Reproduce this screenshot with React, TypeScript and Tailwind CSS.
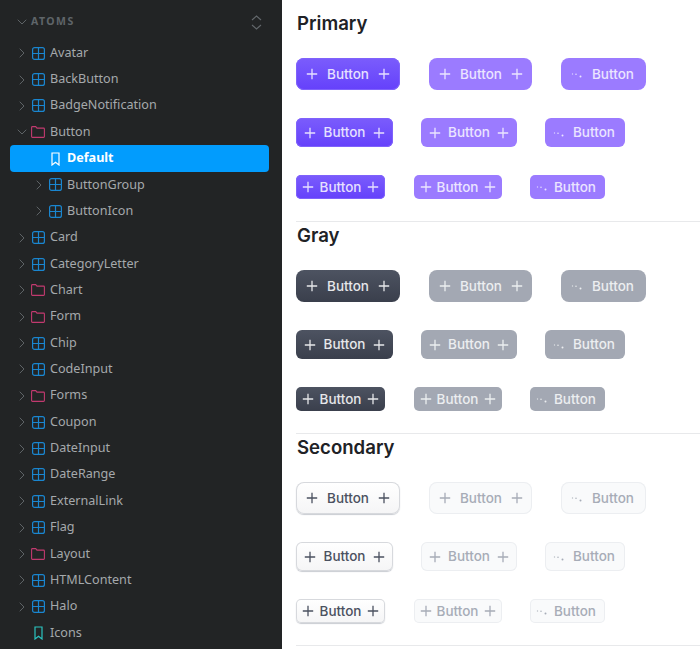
import React from 'react';
import { ChevronDown, ChevronRight } from 'lucide-react';

type Kind = 'component' | 'folder' | 'story';
interface TreeItem {
  label: string;
  kind: Kind;
  depth?: number;
  open?: boolean;
  selected?: boolean;
}

const items: TreeItem[] = [
  { label: 'Avatar', kind: 'component' },
  { label: 'BackButton', kind: 'component' },
  { label: 'BadgeNotification', kind: 'component' },
  { label: 'Button', kind: 'folder', open: true },
  { label: 'Default', kind: 'story', depth: 1, selected: true },
  { label: 'ButtonGroup', kind: 'component', depth: 1 },
  { label: 'ButtonIcon', kind: 'component', depth: 1 },
  { label: 'Card', kind: 'component' },
  { label: 'CategoryLetter', kind: 'component' },
  { label: 'Chart', kind: 'folder' },
  { label: 'Form', kind: 'folder' },
  { label: 'Chip', kind: 'component' },
  { label: 'CodeInput', kind: 'component' },
  { label: 'Forms', kind: 'folder' },
  { label: 'Coupon', kind: 'component' },
  { label: 'DateInput', kind: 'component' },
  { label: 'DateRange', kind: 'component' },
  { label: 'ExternalLink', kind: 'component' },
  { label: 'Flag', kind: 'component' },
  { label: 'Layout', kind: 'folder' },
  { label: 'HTMLContent', kind: 'component' },
  { label: 'Halo', kind: 'component' },
  { label: 'Icons', kind: 'story' },
];

const GridIcon = () => (
  <svg width="13" height="13" viewBox="0 0 13 13" fill="none" stroke="#1a86d0" strokeWidth="1.2">
    <rect x="0.6" y="0.6" width="11.8" height="11.8" rx="2" />
    <path d="M6.5 0.6v11.8M0.6 6.5h11.8" />
  </svg>
);

const FolderIcon = () => (
  <svg width="14" height="12" viewBox="0 0 14 12" fill="none" stroke="#c23a6f" strokeWidth="1.1">
    <path d="M0.6 1.4c0-0.5 0.3-0.8 0.8-0.8h3.3l1.3 1.5h6.6c0.5 0 0.8 0.3 0.8 0.8v7.7c0 0.5-0.3 0.8-0.8 0.8H1.4c-0.5 0-0.8-0.3-0.8-0.8z" />
  </svg>
);

const BookmarkIcon = ({ color }: { color: string }) => (
  <svg width="9" height="14" viewBox="0 0 9 14" fill="none" stroke={color} strokeWidth="1.2">
    <path d="M1 1h7v12l-3.5-2.8L1 13z" />
  </svg>
);

const TreeRow = ({ label, kind, depth = 0, open, selected }: TreeItem) => {
  const hasChevron = kind !== 'story';
  return (
    <div
      className={`mx-[10px] flex h-[26.36px] w-[259px] items-center rounded-[4px] text-[12.6px] ${
        depth ? 'pl-[21px]' : 'pl-[4px]'
      } ${selected ? 'bg-[#029cfd] font-bold text-white' : 'text-[#a5a9ac]'}`}
    >
      <span className="flex w-[16px] shrink-0 justify-center text-[#63686c]">
        {hasChevron && (open ? <ChevronDown size={16} strokeWidth={1.4} /> : <ChevronRight size={16} strokeWidth={1.4} />)}
      </span>
      <span className="flex w-[16px] shrink-0 justify-center">
        {kind === 'component' && <GridIcon />}
        {kind === 'folder' && <FolderIcon />}
        {kind === 'story' && <BookmarkIcon color={selected ? '#ffffff' : '#2bc4c0'} />}
      </span>
      <span className="ml-[4px]">{label}</span>
    </div>
  );
};

const Sidebar = () => (
  <aside className="h-[649px] w-[282px] shrink-0 overflow-hidden bg-[#222425] font-['Noto_Sans',sans-serif]">
    <div className="flex h-[40px] items-center justify-between pl-[14px] pr-[20px] pt-[4px]">
      <div className="flex items-center gap-[1px]">
        <span className="flex w-[16px] justify-center text-[#63686c]">
          <ChevronDown size={16} strokeWidth={1.4} />
        </span>
        <span className="text-[10.5px] font-bold tracking-[0.14em] text-[#5f6569]">ATOMS</span>
      </div>
      <svg width="11" height="15" viewBox="0 0 11 15" fill="none" stroke="#63686c" strokeWidth="1.1">
        <path d="M1 5 5.5 1 10 5M1 10l4.5 4 4.500-4" />
      </svg>
    </div>
    {items.map((item) => (
      <TreeRow key={item.label} {...item} />
    ))}
  </aside>
);

type Tone = 'primary' | 'gray' | 'secondary';
type Size = 'lg' | 'md' | 'sm';

const toneClass: Record<Tone, { on: string; off: string }> = {
  primary: {
    on: 'bg-gradient-to-b from-[#7b5cfc] to-[#6540fb] text-[#e6e0ff] shadow-[inset_0_0_0_1px_#7f62fb]',
    off: 'bg-[#9b7bff] text-[#ebe5ff]',
  },
  gray: {
    on: 'bg-gradient-to-b from-[#4d5361] to-[#3a3f4c] text-[#e6e7ea]',
    off: 'bg-[#a3a8b3] text-[#eceef0]',
  },
  secondary: {
    on: 'bg-gradient-to-b from-white to-[#f5f5f6] text-[#4b5160] shadow-[inset_0_0_0_1px_#d7d9dd,0_1px_1px_#c9ccd2]',
    off: 'bg-[#f9fafb] text-[#a7acb7] shadow-[inset_0_0_0_1px_#eceef1]',
  },
};

const sizeClass: Record<
  Size,
  { box: string; on: string; off: string; spinWidth: string; plus: string; spin: string; gap: string; spinGap: string; row: string }
> = {
  lg: {
    box: 'h-[32px] rounded-[8px]',
    on: 'w-[104px]',
    off: 'w-[103px]',
    spinWidth: 'w-[85px]',
    plus: 'px-[10px]',
    spin: 'pl-[10px]',
    gap: 'gap-[9px]',
    spinGap: 'gap-[9px]',
    row: 'gap-[29px]',
  },
  md: {
    box: 'h-[29px] rounded-[6px]',
    on: 'w-[97px]',
    off: 'w-[96px]',
    spinWidth: 'w-[80px]',
    plus: 'px-[8px]',
    spin: 'pl-[8px]',
    gap: 'gap-[7px]',
    spinGap: 'gap-[8px]',
    row: 'gap-[28px]',
  },
  sm: {
    box: 'h-[24px] rounded-[5px]',
    on: 'w-[89px]',
    off: 'w-[88px]',
    spinWidth: 'w-[75px]',
    plus: 'px-[6px]',
    spin: 'pl-[6px]',
    gap: 'gap-[5px]',
    spinGap: 'gap-[6px]',
    row: 'gap-[28.5px]',
  },
};

const PlusIcon = () => (
  <svg width="12" height="12" viewBox="0 0 12 12" fill="none" stroke="currentColor" strokeWidth="1.3" className="shrink-0">
    <path d="M6 0.8v10.4M0.8 6h10.4" />
  </svg>
);

const DotsIcon = () => (
  <svg width="12" height="12" viewBox="0 0 12 12" fill="currentColor" className="shrink-0">
    <circle cx="1.5" cy="6" r="0.7" opacity="0.8" />
    <circle cx="5" cy="6.3" r="0.8" opacity="0.9" />
    <circle cx="9.5" cy="8.5" r="1" />
  </svg>
);

const DemoButton = ({ tone, size, disabled, loading }: { tone: Tone; size: Size; disabled?: boolean; loading?: boolean }) => {
  const s = sizeClass[size];
  return (
    <div
      className={`flex shrink-0 items-center text-[13.5px] font-medium leading-none ${s.box} ${
        loading ? `${s.spin} ${s.spinGap} ${s.spinWidth}` : `${s.plus} ${s.gap} ${disabled ? s.off : s.on}`
      } ${disabled ? toneClass[tone].off : toneClass[tone].on}`}
    >
      {loading ? <DotsIcon /> : <PlusIcon />}
      <span className={`pt-[1px] ${loading ? '' : 'flex-1 text-center'}`}>Button</span>
      {!loading && <PlusIcon />}
    </div>
  );
};

const ButtonRow = ({ tone, size, className }: { tone: Tone; size: Size; className: string }) => (
  <div className={`flex items-center ${sizeClass[size].row} ${className}`}>
    <DemoButton tone={tone} size={size} />
    <DemoButton tone={tone} size={size} disabled />
    <DemoButton tone={tone} size={size} disabled loading />
  </div>
);

const Section = ({ title, tone, className }: { title: string; tone: Tone; className: string }) => (
  <section className={`border-b border-[#e8e9eb] ${className}`}>
    <h2 className="pl-[1px] text-[18.6px] font-semibold leading-[24px] text-[#202226]">{title}</h2>
    <ButtonRow tone={tone} size="lg" className="mt-[23px]" />
    <ButtonRow tone={tone} size="md" className="mt-[28px]" />
    <ButtonRow tone={tone} size="sm" className="mt-[28px]" />
  </section>
);

export default function App() {
  return (
    <div className="flex h-[649px] w-[700px] overflow-hidden bg-white">
      <Sidebar />
      <main className="min-w-0 flex-1 pl-[14px] font-['Inter',sans-serif]">
        <Section title="Primary" tone="primary" className="h-[222px] pt-[11px]" />
        <Section title="Gray" tone="gray" className="h-[212px] pt-[1px]" />
        <Section title="Secondary" tone="secondary" className="h-[212px] pt-[1px]" />
      </main>
    </div>
  );
}
